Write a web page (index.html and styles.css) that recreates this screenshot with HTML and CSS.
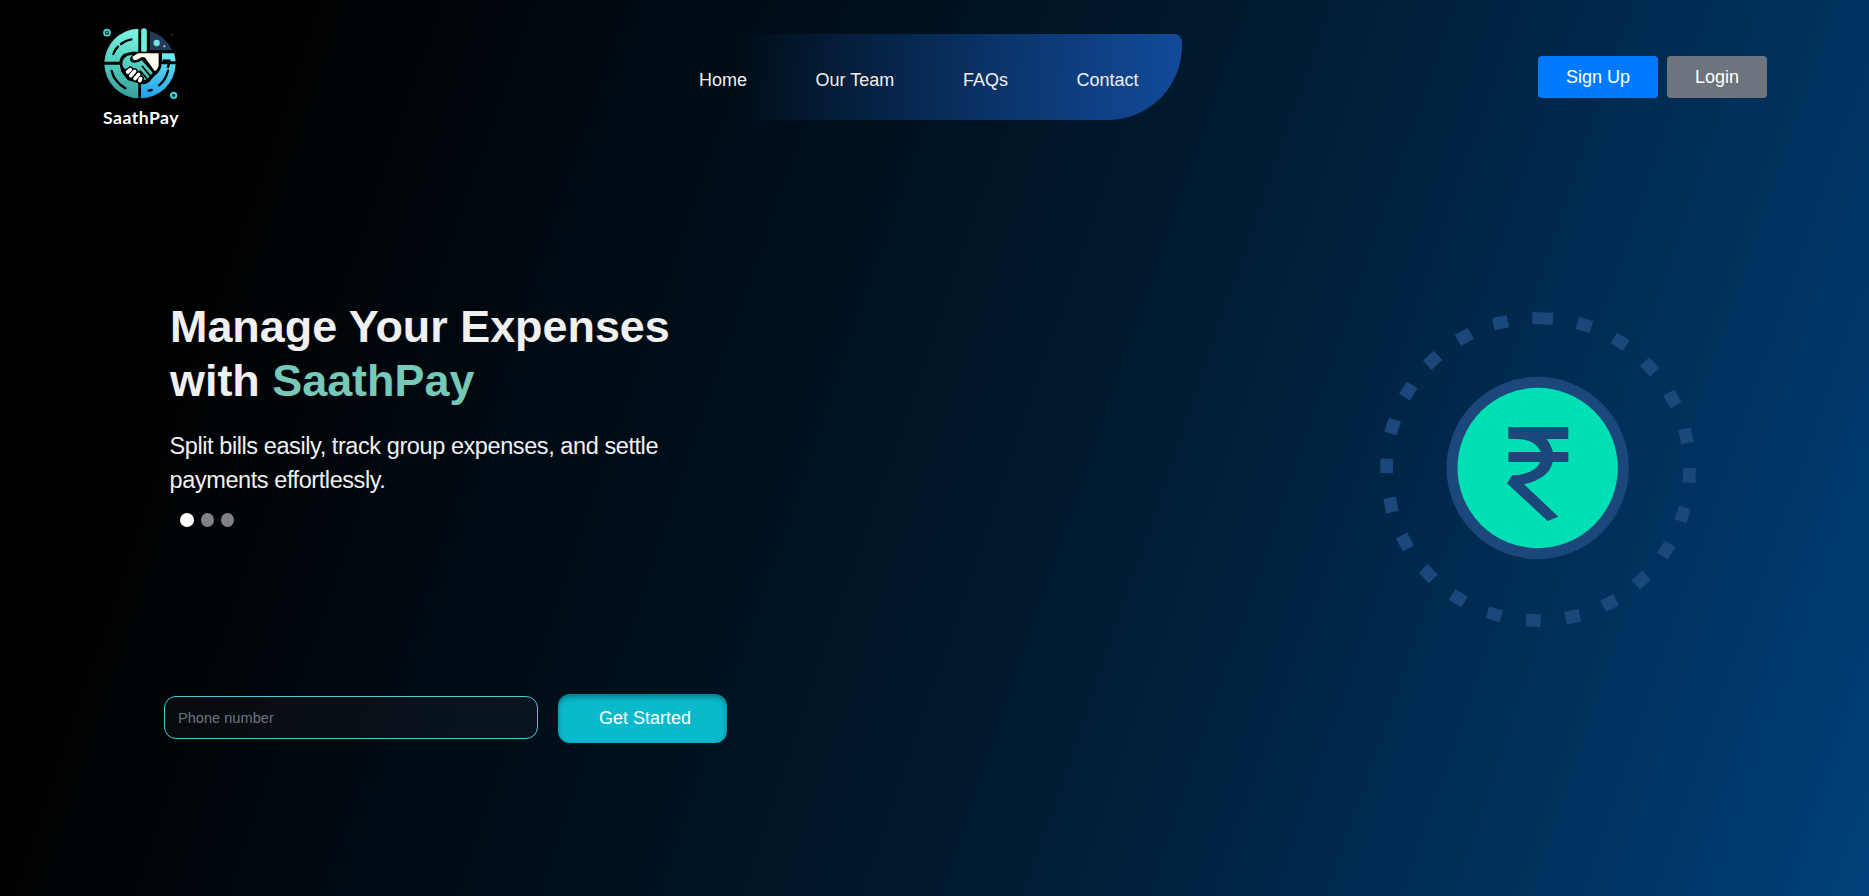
FILE: index.html
```html
<!DOCTYPE html>
<html lang="en">
<head>
<meta charset="utf-8">
<title>SaathPay</title>
<link rel="stylesheet" href="styles.css">
</head>
<body>
<div class="page">
  <header class="header">
    <a class="logo">
      <svg class="logo-mark" width="82" height="80" viewBox="0 0 246 240">
        <defs>
          <linearGradient id="teal" gradientUnits="userSpaceOnUse" x1="90" y1="10" x2="60" y2="220"><stop offset="0" stop-color="#7cf6e2"/><stop offset=".5" stop-color="#52cfc0"/><stop offset="1" stop-color="#349c98"/></linearGradient>
          <linearGradient id="blue" gradientUnits="userSpaceOnUse" x1="200" y1="80" x2="160" y2="220"><stop offset="0" stop-color="#6be6ee"/><stop offset="1" stop-color="#22a3ec"/></linearGradient>
        </defs>
        <path d="M115 11A106 106 0 0 0 13 110H115Z" fill="url(#teal)"/>
        <path d="M13 119A106 106 0 0 0 115 220V119Z" fill="url(#teal)"/>
        <path d="M123 220A106 106 0 0 0 227 118H123Z" fill="url(#blue)"/>
        <path d="M150 18A103 103 0 0 1 216 76H150Z" fill="#26395a"/>
        <path d="M186 85H223L227 109H186Z" fill="#6be6ee"/>
        <path d="M132 18V74" stroke="#6feedd" stroke-width="17" stroke-linecap="round"/>
        <path d="M188 107H208Q207 120 203 129" fill="none" stroke="#000" stroke-width="7"/>
        <g fill="none" stroke="#000" stroke-width="7" stroke-linecap="round">
          <path d="M40 87Q44 75 54 65M63 57Q77 46 94 43M35 138Q43 170 76 190M204 137Q197 165 177 181M146 197L155 195"/>
        </g>
        <path d="M58 112Q60 94 73 86L96 80H184V124Q180 142 164 152L148 170Q134 181 121 176L84 166L64 141Z" fill="#000"/>
        <path d="M67 116Q67 99 83 92L99 89Q87 98 98 106Q108 112 124 100L135 107L158 143Q157 151 147 148Q151 158 141 161Q133 169 125 160Q127 151 115 150Q111 137 98 139Q92 125 77 133Q67 126 67 116Z" fill="url(#teal)"/>
        <path d="M95 97L114 85H176V121Q174 135 164 138L136 99Q128 92 119 100Q108 108 101 104Z" fill="#fffced"/>
        <path d="M96 96Q88 107 101 110Q114 111 126 102L161 141" fill="none" stroke="#000" stroke-width="6" stroke-linejoin="round"/>
        <path d="M121 138L139 159M127 124L149 151" fill="none" stroke="#000" stroke-width="5" stroke-linecap="round"/>
        <path d="M83 141L91 134M92 152L104 139M105 161L116 148M119 167L122 161" stroke="#000" stroke-width="19" stroke-linecap="round"/>
        <path d="M83 141L91 134M92 152L104 139M105 161L116 148M119 167L122 161" stroke="#fff" stroke-width="11" stroke-linecap="round"/>
        <circle cx="170" cy="54" r="9.5" fill="#70e7e3"/>
        <circle cx="193" cy="64" r="3" fill="#b7e4ec"/>
        <circle cx="216" cy="29" r="2" fill="#508c93"/>
        <circle cx="21" cy="23" r="9" fill="#12373c" stroke="#5bd0c7" stroke-width="5"/>
        <path d="M17 20H25L21 26Z" fill="#5bd0c7"/>
        <circle cx="221" cy="211" r="8" fill="#0a3036" stroke="#43d1dd" stroke-width="6"/>
      </svg>
      <span class="logo-name">SaathPay</span>
    </a>
    <nav class="nav"><a>Home</a><a>Our Team</a><a>FAQs</a><a>Contact</a></nav>
    <div class="auth"><button class="btn signup">Sign Up</button><button class="btn login">Login</button></div>
  </header>
  <main class="hero">
    <section class="intro">
      <h1 class="title">Manage Your Expenses<br>with <span class="brand">SaathPay</span></h1>
      <p class="lead">Split bills easily, track group expenses, and settle<br>payments effortlessly.</p>
      <div class="dots"><i class="dot active"></i><i class="dot"></i><i class="dot"></i></div>
      <form class="signup-form"><input class="phone" type="text" placeholder="Phone number"><button class="start" type="button">Get Started</button></form>
    </section>
    <svg class="coin" width="340" height="340" viewBox="0 0 1020 1020">
      <g fill="#1b477b">
        <path d="M487 36L550 38L548 75L487 71Z"/>
        <rect x="-22" y="-19" width="44" height="38" transform="translate(643 75) rotate(17)"/>
        <rect x="-22" y="-19" width="44" height="38" transform="translate(750 125) rotate(32)"/>
        <rect x="-22" y="-19" width="44" height="38" transform="translate(839 201) rotate(47)"/>
        <rect x="-22" y="-19" width="44" height="38" transform="translate(907 297) rotate(62)"/>
        <rect x="-22" y="-19" width="44" height="38" transform="translate(948 408) rotate(79)"/>
        <rect x="-22" y="-19" width="44" height="38" transform="translate(958 526) rotate(92)"/>
        <rect x="-22" y="-19" width="44" height="38" transform="translate(938 643) rotate(108)"/>
        <rect x="-22" y="-19" width="44" height="38" transform="translate(889 750) rotate(122)"/>
        <rect x="-22" y="-19" width="44" height="38" transform="translate(814 840) rotate(138)"/>
        <rect x="-22" y="-19" width="44" height="38" transform="translate(719 909) rotate(152)"/>
        <rect x="-22" y="-19" width="44" height="38" transform="translate(608 950) rotate(168)"/>
        <rect x="-22" y="-19" width="44" height="38" transform="translate(490 961) rotate(182)"/>
        <rect x="-22" y="-19" width="44" height="38" transform="translate(373 943) rotate(197)"/>
        <rect x="-22" y="-19" width="44" height="38" transform="translate(265 895) rotate(212)"/>
        <rect x="-22" y="-19" width="44" height="38" transform="translate(175 821) rotate(227)"/>
        <rect x="-22" y="-19" width="44" height="38" transform="translate(105 726) rotate(242)"/>
        <rect x="-22" y="-19" width="44" height="38" transform="translate(63 615) rotate(259)"/>
        <rect x="-22" y="-19" width="44" height="38" transform="translate(50 498) rotate(272)"/>
        <rect x="-22" y="-19" width="44" height="38" transform="translate(68 380) rotate(288)"/>
        <rect x="-22" y="-19" width="44" height="38" transform="translate(115 273) rotate(302)"/>
        <rect x="-22" y="-19" width="44" height="38" transform="translate(188 181) rotate(317)"/>
        <rect x="-22" y="-19" width="44" height="38" transform="translate(283 111) rotate(331)"/>
        <rect x="-22" y="-19" width="44" height="38" transform="translate(392 68) rotate(348)"/>
      </g>
      <circle cx="503" cy="504" r="257" fill="#00e0b4" stroke="#1b477b" stroke-width="33"/>
      <path d="M415 381H595V417H530Q544 435 549 456H595V486H548Q538 535 462 553L565 650L533 663L411 550L427 526Q494 523 511 486H415V456H512Q498 417 437 417H415Z" fill="#1b477b"/>
    </svg>
  </main>
</div>
</body>
</html>
```

FILE: styles.css
```css
* { box-sizing: border-box; }
body { margin: 0; font-family: "Liberation Sans", Arial, sans-serif; color: #f0f0f0; background: #001022; }
.page { height: 896px; overflow: hidden; background: linear-gradient(109deg, #000 12%, #001a2f 58%, #00407a 100%); }
.header { height: 154px; display: flex; align-items: flex-start; }
.logo { width: 82px; margin: 25px 0 0 100px; display: flex; flex-direction: column; align-items: center; }
.logo-name { font: 700 17.6px/20px "Lato", sans-serif; color: #fff; margin-top: 3px; letter-spacing: .5px; }
.nav { width: 483px; height: 86px; margin: 34px 0 0 517px; display: flex; gap: 68.6px; font-size: 18px; line-height: 92px; white-space: nowrap; border-radius: 10px 8px 74px 10px; background: linear-gradient(90deg, transparent 8%, #124a9a 100%); }
.auth { display: flex; gap: 9px; margin: 56px 0 0 356px; }
.btn { height: 42px; border: 0; border-radius: 4px; font: 18px "Liberation Sans", sans-serif; color: #fff; padding: 0; }
.signup { width: 120px; background: #007bff; }
.login { width: 100px; background: #6c757d; }
.hero { display: flex; align-items: flex-start; }
.intro { flex: none; width: 1370px; padding: 146px 0 0 164px; }
.title { margin: 0 0 0 6px; font-size: 44.9px; line-height: 54px; }
.brand { color: #76c8b9; }
.lead { margin: 21px 0 0 5.6px; font-size: 23.5px; line-height: 34px; letter-spacing: -.42px; white-space: nowrap; }
.dots { display: flex; gap: 7px; margin: 16px 0 0 15.5px; }
.dot { width: 13px; height: 14px; border-radius: 50%; background: #808184; }
.dot.active { width: 14px; background: #fff; }
.signup-form { display: flex; gap: 20px; align-items: flex-start; margin: 167px 0 0; }
.phone { width: 374px; height: 43px; margin-top: 2px; border: 1px solid #4bc8d2; border-radius: 12px; padding: 0 13px; background: rgba(255,255,255,.03); font: 14.6px "Liberation Sans", sans-serif; color: #fff; }
.phone::placeholder { color: #6c757d; opacity: 1; }
.start { width: 169px; height: 49px; border: 0; border-radius: 12px; padding: 0 0 1px 5px; color: #fff; font: 18px "Liberation Sans", sans-serif; background: #0ab9cc; box-shadow: inset 0 3px 5px rgba(0,60,70,.5); }
.coin { margin-top: 146px; flex: none; }
```
